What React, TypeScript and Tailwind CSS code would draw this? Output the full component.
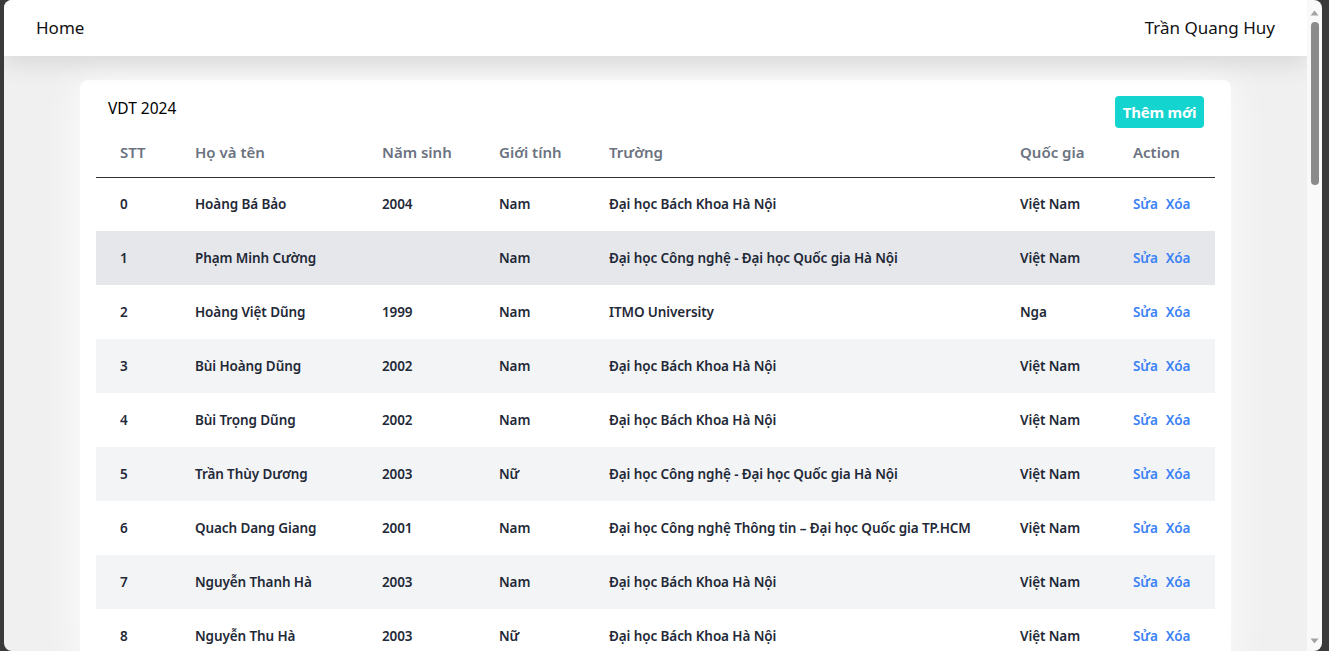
import React from "react";

const students = [
  { name: "Hoàng Bá Bảo", year: "2004", gender: "Nam", school: "Đại học Bách Khoa Hà Nội", country: "Việt Nam" },
  { name: "Phạm Minh Cường", year: "", gender: "Nam", school: "Đại học Công nghệ - Đại học Quốc gia Hà Nội", country: "Việt Nam" },
  { name: "Hoàng Việt Dũng", year: "1999", gender: "Nam", school: "ITMO University", country: "Nga" },
  { name: "Bùi Hoàng Dũng", year: "2002", gender: "Nam", school: "Đại học Bách Khoa Hà Nội", country: "Việt Nam" },
  { name: "Bùi Trọng Dũng", year: "2002", gender: "Nam", school: "Đại học Bách Khoa Hà Nội", country: "Việt Nam" },
  { name: "Trần Thùy Dương", year: "2003", gender: "Nữ", school: "Đại học Công nghệ - Đại học Quốc gia Hà Nội", country: "Việt Nam" },
  { name: "Quach Dang Giang", year: "2001", gender: "Nam", school: "Đại học Công nghệ Thông tin – Đại học Quốc gia TP.HCM", country: "Việt Nam" },
  { name: "Nguyễn Thanh Hà", year: "2003", gender: "Nam", school: "Đại học Bách Khoa Hà Nội", country: "Việt Nam" },
  { name: "Nguyễn Thu Hà", year: "2003", gender: "Nữ", school: "Đại học Bách Khoa Hà Nội", country: "Việt Nam" },
];

const columns = [
  { label: "STT", w: "w-[75px]" },
  { label: "Họ và tên", w: "w-[187px]" },
  { label: "Năm sinh", w: "w-[117px]" },
  { label: "Giới tính", w: "w-[110px]" },
  { label: "Trường", w: "w-[411px]" },
  { label: "Quốc gia", w: "w-[113px]" },
  { label: "Action", w: "w-[106px]" },
];

export default function App() {
  return (
    <div
      className="flex h-[651px] bg-[#3a3a3a] pl-1 pr-[7px] overflow-hidden"
      style={{ fontFamily: '"Noto Sans", "Open Sans", sans-serif' }}
    >
      <div className="flex flex-1 rounded-lg overflow-hidden">
        {/* PAGE */}
        <div className="flex-1 flex flex-col bg-[#f0f0f0] overflow-hidden">
          {/* NAVBAR */}
          <header className="relative z-10 h-14 shrink-0 bg-white flex items-center justify-between px-8 text-[17px] text-[#111] shadow-[0_8px_24px_rgba(0,0,0,0.10)]">
            <span>Home</span>
            <span>Trần Quang Huy</span>
          </header>

          {/* MAIN */}
          <main className="flex-1 px-[76px] pt-6">
            <div className="bg-white rounded-lg shadow-[0_0_40px_rgba(255,255,255,0.9)]">
              <div className="flex items-start justify-between pt-4 pl-7 pr-[27px]">
                <h2 className="text-[15.5px] leading-6 text-black">VDT 2024</h2>
                <button className="h-8 w-[89px] rounded bg-[#14d4d0] text-white font-bold text-[15px] tracking-[-0.2px]">
                  Thêm mới
                </button>
              </div>

              <div className="px-4">
                <table className="table-fixed w-full border-collapse">
                  <thead>
                    <tr className="border-b border-[#333]">
                      {columns.map((c) => (
                        <th
                          key={c.label}
                          className={`${c.w} h-[49px] pl-6 text-left text-[15px] font-semibold text-[#6b7280]`}
                        >
                          {c.label}
                        </th>
                      ))}
                    </tr>
                  </thead>
                  <tbody className="text-[13.5px] tracking-[-0.1px] font-semibold text-[#1f2937]">
                    {students.map((s, i) => (
                      <tr
                        key={i}
                        className={
                          i === 1 ? "bg-[#e5e7eb]" : i % 2 === 1 ? "bg-[#f3f4f6]" : "bg-white"
                        }
                      >
                        <td className="h-[54px] pl-6">{i}</td>
                        <td className="pl-6">{s.name}</td>
                        <td className="pl-6">{s.year}</td>
                        <td className="pl-6">{s.gender}</td>
                        <td className="pl-6 whitespace-nowrap">{s.school}</td>
                        <td className="pl-6">{s.country}</td>
                        <td className="pl-6 text-[#3b82f6]">
                          <span className="mr-2">Sửa</span>
                          <span>Xóa</span>
                        </td>
                      </tr>
                    ))}
                  </tbody>
                </table>
              </div>
            </div>
          </main>
        </div>

        {/* SCROLLBAR */}
        <div className="w-[15px] shrink-0 bg-[#f9f9f9] flex flex-col items-center">
          <svg width="9" height="6" viewBox="0 0 9 6" className="mt-[10px]">
            <path d="M0.5 5.5 L4.5 0.5 L8.5 5.5 Z" fill="#a3a3a3" />
          </svg>
          <div className="mt-[6px] w-2 h-[163px] rounded-full bg-[#8b8b8b]" />
          <div className="flex-1" />
          <svg width="9" height="6" viewBox="0 0 9 6" className="mb-[7px]">
            <path d="M0.5 0.5 L4.5 5.5 L8.5 0.5 Z" fill="#a3a3a3" />
          </svg>
        </div>
      </div>
    </div>
  );
}
